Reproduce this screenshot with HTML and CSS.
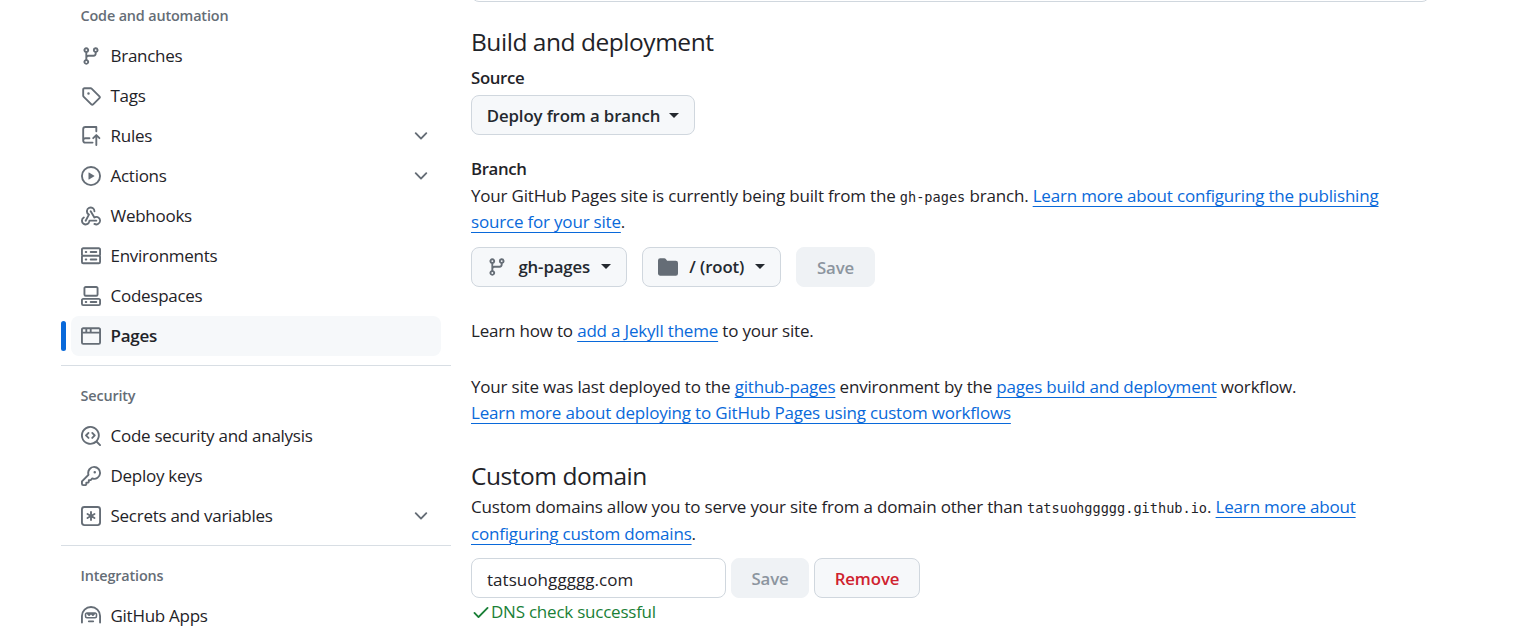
FILE: index.html
```html
<!DOCTYPE html>
<html lang="en">
<head>
<meta charset="utf-8">
<title>Pages settings</title>
<link rel="stylesheet" href="styles.css">
</head>
<body>
<svg class="sprite" aria-hidden="true">
  <symbol id="branch" viewBox="0 0 16 16"><path d="M9.5 3.25a2.25 2.25 0 1 1 3 2.122V6A2.5 2.5 0 0 1 10 8.5H6a1 1 0 0 0-1 1v1.128a2.251 2.251 0 1 1-1.5 0V5.372a2.25 2.25 0 1 1 1.5 0v1.836A2.493 2.493 0 0 1 6 7h4a1 1 0 0 0 1-1v-.628A2.25 2.25 0 0 1 9.5 3.25Zm-6 0a.75.75 0 1 0 1.5 0 .75.75 0 0 0-1.5 0Zm8.25-.75a.75.75 0 1 0 0 1.5.75.75 0 0 0 0-1.5ZM4.25 12a.75.75 0 1 0 0 1.5.75.75 0 0 0 0-1.5Z"/></symbol>
  <symbol id="tag" viewBox="0 0 16 16"><path d="M1 7.775V2.75C1 1.784 1.784 1 2.75 1h5.025c.464 0 .91.184 1.238.513l6.25 6.25a1.75 1.75 0 0 1 0 2.474l-5.026 5.026a1.75 1.75 0 0 1-2.474 0l-6.25-6.25A1.752 1.752 0 0 1 1 7.775Zm1.5 0c0 .066.026.13.073.177l6.25 6.25a.25.25 0 0 0 .354 0l5.025-5.025a.25.25 0 0 0 0-.354l-6.25-6.25a.25.25 0 0 0-.177-.073H2.75a.25.25 0 0 0-.25.25ZM6 5a1 1 0 1 1 0 2 1 1 0 0 1 0-2Z"/></symbol>
  <symbol id="push" viewBox="0 0 16 16"><path d="M1 2.5A2.5 2.5 0 0 1 3.5 0h8.75a.75.75 0 0 1 .75.75v3.5a.75.75 0 0 1-1.5 0V1.5h-8a1 1 0 0 0-1 1v6.708A2.493 2.493 0 0 1 3.5 9h3.25a.75.75 0 0 1 0 1.5H3.5a1 1 0 0 0 0 2h5.75a.75.75 0 0 1 0 1.5H3.5A2.5 2.5 0 0 1 1 11.5Zm13.23 7.79-1.225-1.224v6.184a.75.75 0 0 1-1.5 0V9.066L10.28 10.29a.75.75 0 0 1-1.06-1.061l2.505-2.504a.75.75 0 0 1 1.06 0L15.29 9.23a.751.751 0 0 1-1.06 1.06Z"/></symbol>
  <symbol id="play" viewBox="0 0 16 16"><path d="M8 0a8 8 0 1 1 0 16A8 8 0 0 1 8 0ZM1.5 8a6.5 6.5 0 1 0 13 0 6.5 6.5 0 0 0-13 0Zm4.879-2.773 4.264 2.559a.25.25 0 0 1 0 .428l-4.264 2.559A.25.25 0 0 1 6 10.559V5.442a.25.25 0 0 1 .379-.215Z"/></symbol>
  <symbol id="webhook" viewBox="0 0 16 16"><path d="M5.5 4.25a2.25 2.25 0 0 1 4.5 0 .75.75 0 0 0 1.5 0 3.75 3.75 0 1 0-6.14 2.889l-2.272 4.258a.75.75 0 0 0 1.324.706L7 7.25a.75.75 0 0 0-.309-1.015A2.25 2.25 0 0 1 5.5 4.25Z"/><path d="M7.364 3.607a.75.75 0 0 1 1.03.257l2.608 4.349a3.75 3.75 0 1 1-.628 6.785.75.75 0 0 1 .752-1.299 2.25 2.25 0 1 0-.033-3.88.75.75 0 0 1-1.03-.256L7.107 4.636a.75.75 0 0 1 .257-1.03Z"/><path d="M2.9 8.776A.75.75 0 0 1 2.625 9.8 2.25 2.25 0 1 0 6 11.75a.75.75 0 0 1 .75-.751h5.5a.75.75 0 0 1 0 1.5H7.425a3.751 3.751 0 1 1-5.55-3.998.75.75 0 0 1 1.024.274Z"/></symbol>
  <symbol id="server" viewBox="0 0 16 16"><path d="M1.75 1h12.5c.966 0 1.75.784 1.75 1.75v4c0 .372-.116.717-.314 1 .198.283.314.628.314 1v4a1.75 1.75 0 0 1-1.75 1.75H1.75A1.75 1.75 0 0 1 0 12.75v-4c0-.358.109-.707.314-1a1.739 1.739 0 0 1-.314-1v-4C0 1.784.784 1 1.75 1ZM1.5 2.75v4c0 .138.112.25.25.25h12.5a.25.25 0 0 0 .25-.25v-4a.25.25 0 0 0-.25-.25H1.75a.25.25 0 0 0-.25.25Zm.25 5.75a.25.25 0 0 0-.25.25v4c0 .138.112.25.25.25h12.5a.25.25 0 0 0 .25-.25v-4a.25.25 0 0 0-.25-.25ZM7 4.75A.75.75 0 0 1 7.75 4h4.5a.75.75 0 0 1 0 1.5h-4.5A.75.75 0 0 1 7 4.75ZM7.75 10h4.5a.75.75 0 0 1 0 1.5h-4.5a.75.75 0 0 1 0-1.5ZM3 4.75A.75.75 0 0 1 3.75 4h.5a.75.75 0 0 1 0 1.5h-.5A.75.75 0 0 1 3 4.75ZM3.75 10h.5a.75.75 0 0 1 0 1.5h-.5a.75.75 0 0 1 0-1.5Z"/></symbol>
  <symbol id="codespaces" viewBox="0 0 16 16"><path d="M0 11.25c0-.966.784-1.75 1.75-1.75h12.5c.966 0 1.75.784 1.75 1.75v3A1.75 1.75 0 0 1 14.25 16H1.75A1.75 1.75 0 0 1 0 14.25Zm2-9.5C2 .784 2.784 0 3.75 0h8.5C13.216 0 14 .784 14 1.75v5a1.75 1.75 0 0 1-1.75 1.75h-8.5A1.75 1.75 0 0 1 2 6.75Zm1.75-.25a.25.25 0 0 0-.25.25v5c0 .138.112.25.25.25h8.5a.25.25 0 0 0 .25-.25v-5a.25.25 0 0 0-.25-.25Zm-2 9.5a.25.25 0 0 0-.25.25v3c0 .138.112.25.25.25h12.5a.25.25 0 0 0 .25-.25v-3a.25.25 0 0 0-.25-.25ZM7 12.75a.75.75 0 0 1 .75-.75h4.5a.75.75 0 0 1 0 1.5h-4.5a.75.75 0 0 1-.75-.75Zm-4 0a.75.75 0 0 1 .75-.75h.5a.75.75 0 0 1 0 1.5h-.5a.75.75 0 0 1-.75-.75Z"/></symbol>
  <symbol id="browser" viewBox="0 0 16 16"><path d="M0 2.75C0 1.784.784 1 1.75 1h12.5c.966 0 1.75.784 1.75 1.75v10.5A1.75 1.75 0 0 1 14.25 15H1.75A1.75 1.75 0 0 1 0 13.25ZM14.5 6h-13v7.25c0 .138.112.25.25.25h12.5a.25.25 0 0 0 .25-.25Zm-6-3.5v2h6V2.75a.25.25 0 0 0-.25-.25ZM5 2.5v2h2v-2Zm-3.25 0a.25.25 0 0 0-.25.25V4.5h2v-2Z"/></symbol>
  <symbol id="codescan" viewBox="0 0 16 16"><path d="M8.47 4.97a.75.75 0 0 0 0 1.06L9.94 7.5 8.47 8.97a.75.75 0 1 0 1.06 1.06l2-2a.75.75 0 0 0 0-1.06l-2-2a.75.75 0 0 0-1.06 0ZM6.53 6.03a.75.75 0 0 0-1.06-1.06l-2 2a.75.75 0 0 0 0 1.06l2 2a.75.75 0 1 0 1.06-1.06L5.06 7.5l1.47-1.47Z"/><path d="M12.246 13.307a7.501 7.501 0 1 1 1.06-1.06l2.474 2.473a.749.749 0 1 1-1.06 1.06ZM1.5 7.5a6.002 6.002 0 0 0 3.608 5.504 6.002 6.002 0 0 0 6.486-1.117.748.748 0 0 1 .292-.293A6 6 0 1 0 1.5 7.5Z"/></symbol>
  <symbol id="key" viewBox="0 0 16 16"><path d="M10.5 0a5.499 5.499 0 1 1-1.288 10.848l-.932.932a.749.749 0 0 1-.53.22H7v.75a.749.749 0 0 1-.22.53l-.5.5a.749.749 0 0 1-.53.22H5v.75a.749.749 0 0 1-.22.53l-.5.5a.749.749 0 0 1-.53.22h-2A1.75 1.75 0 0 1 0 14.25v-2c0-.199.079-.389.22-.53l4.932-4.932A5.5 5.5 0 0 1 10.5 0Zm-4 5.5c-.001.431.069.86.205 1.269a.75.75 0 0 1-.181.768L1.5 12.56v1.69c0 .138.112.25.25.25h1.69l.06-.06v-1.19a.75.75 0 0 1 .75-.75h1.19l.06-.06v-1.19a.75.75 0 0 1 .75-.75h1.19l1.023-1.025a.75.75 0 0 1 .768-.18A4 4 0 1 0 6.5 5.5ZM11 6a1 1 0 1 1 0-2 1 1 0 0 1 0 2Z"/></symbol>
  <symbol id="asterisk" viewBox="0 0 16 16"><path d="M0 2.75A2.75 2.75 0 0 1 2.75 0h10.5A2.75 2.75 0 0 1 16 2.75v10.5A2.75 2.75 0 0 1 13.25 16H2.75A2.75 2.75 0 0 1 0 13.25ZM2.75 1.5c-.69 0-1.25.56-1.25 1.25v10.5c0 .69.56 1.25 1.25 1.25h10.5c.69 0 1.25-.56 1.25-1.25V2.75c0-.69-.56-1.25-1.25-1.25Z"/><path d="M8 4a.75.75 0 0 1 .75.75V6.7l1.69-.975a.75.75 0 0 1 .75 1.3L9.5 8l1.69.976a.75.75 0 0 1-.75 1.298L8.75 9.3v1.951a.75.75 0 0 1-1.5 0V9.299l-1.69.976a.75.75 0 0 1-.75-1.3L6.5 8l-1.69-.975a.75.75 0 0 1 .75-1.3l1.69.976V4.75A.75.75 0 0 1 8 4Z"/></symbol>
  <symbol id="hubot" viewBox="0 0 16 16"><path d="M0 8a8 8 0 1 1 16 0v5.25a.75.75 0 0 1-1.5 0V8a6.5 6.5 0 1 0-13 0v5.25a.75.75 0 0 1-1.5 0Zm5.5 4.25a.75.75 0 0 1 .75-.75h3.5a.75.75 0 0 1 0 1.5h-3.5a.75.75 0 0 1-.75-.75ZM3 6.75C3 5.784 3.784 5 4.75 5h6.5c.966 0 1.75.784 1.75 1.75v1.5A1.75 1.75 0 0 1 11.25 10h-6.5A1.75 1.75 0 0 1 3 8.25Zm1.47-.53a.75.75 0 0 0-.22.53v1.5c0 .276.224.5.5.5h6.5a.5.5 0 0 0 .5-.5v-1.5a.75.75 0 0 0-.22-.53l-1.5 1.5a.75.75 0 0 1-1.06 0L8 6.81l-.97.97a.75.75 0 0 1-1.06 0Z" fill-rule="evenodd"/></symbol>
  <symbol id="folder" viewBox="0 0 16 16"><path d="M1.75 1A1.75 1.75 0 0 0 0 2.75v10.5C0 14.216.784 15 1.75 15h12.5A1.75 1.75 0 0 0 16 13.25v-8.5A1.75 1.75 0 0 0 14.25 3H7.5a.25.25 0 0 1-.2-.1l-.9-1.2C6.07 1.26 5.55 1 5 1H1.75Z"/></symbol>
  <symbol id="check" viewBox="0 0 16 16"><path d="M13.78 4.22a.75.75 0 0 1 0 1.06l-7.25 7.25a.75.75 0 0 1-1.06 0L2.22 9.28a.751.751 0 0 1 1.06-1.06L6 10.94l6.72-6.72a.75.75 0 0 1 1.06 0Z"/></symbol>
  <symbol id="chevron" viewBox="0 0 16 16"><path d="M12.78 5.22a.749.749 0 0 1 0 1.06l-4.25 4.25a.749.749 0 0 1-1.06 0L3.22 6.28a.749.749 0 1 1 1.06-1.06L8 8.939l3.72-3.719a.749.749 0 0 1 1.06 0Z"/></symbol>
</svg>
<div class="layout">
  <nav class="sidebar">
    <h3 class="group-title">Code and automation</h3>
    <a class="item"><svg class="icon"><use href="#branch"/></svg><span class="label">Branches</span></a>
    <a class="item"><svg class="icon"><use href="#tag"/></svg><span class="label">Tags</span></a>
    <a class="item"><svg class="icon"><use href="#push"/></svg><span class="label">Rules</span><svg class="icon"><use href="#chevron"/></svg></a>
    <a class="item"><svg class="icon"><use href="#play"/></svg><span class="label">Actions</span><svg class="icon"><use href="#chevron"/></svg></a>
    <a class="item"><svg class="icon"><use href="#webhook"/></svg><span class="label">Webhooks</span></a>
    <a class="item"><svg class="icon"><use href="#server"/></svg><span class="label">Environments</span></a>
    <a class="item"><svg class="icon"><use href="#codespaces"/></svg><span class="label">Codespaces</span></a>
    <a class="item current"><svg class="icon"><use href="#browser"/></svg><span class="label">Pages</span></a>
    <hr class="divider">
    <h3 class="group-title">Security</h3>
    <a class="item"><svg class="icon"><use href="#codescan"/></svg><span class="label">Code security and analysis</span></a>
    <a class="item"><svg class="icon"><use href="#key"/></svg><span class="label">Deploy keys</span></a>
    <a class="item"><svg class="icon"><use href="#asterisk"/></svg><span class="label">Secrets and variables</span><svg class="icon"><use href="#chevron"/></svg></a>
    <hr class="divider">
    <h3 class="group-title">Integrations</h3>
    <a class="item"><svg class="icon"><use href="#hubot"/></svg><span class="label">GitHub Apps</span></a>
  </nav>
  <main class="content">
    <div class="card-end"></div>
    <h2 class="title">Build and deployment</h2>
    <h4 class="subtitle source">Source</h4>
    <div class="row"><button class="btn deploy">Deploy from a branch<i class="caret"></i></button></div>
    <h4 class="subtitle branch">Branch</h4>
    <p class="text">Your GitHub Pages site is currently being built from the <code class="code">gh-pages</code> branch. <a class="link">Learn more about configuring the publishing<br>source for your site</a>.</p>
    <div class="row pickers">
      <button class="btn ref"><svg class="icon"><use href="#branch"/></svg>gh-pages<i class="caret"></i></button>
      <button class="btn root"><svg class="icon"><use href="#folder"/></svg>/ (root)<i class="caret"></i></button>
      <button class="btn disabled save">Save</button>
    </div>
    <p class="text jekyll">Learn how to <a class="link">add a Jekyll theme</a> to your site.</p>
    <p class="text deployed">Your site was last deployed to the <a class="link">github-pages</a> environment by the <a class="link">pages build and deployment</a> workflow.<br><a class="link">Learn more about deploying to GitHub Pages using custom workflows</a></p>
    <h2 class="title domain">Custom domain</h2>
    <p class="text about-domain">Custom domains allow you to serve your site from a domain other than <code class="code">tatsuohggggg.github.io</code>. <a class="link">Learn more about<br>configuring custom domains</a>.</p>
    <div class="row domain-form">
      <input class="input" value="tatsuohggggg.com">
      <button class="btn disabled save-domain">Save</button>
      <button class="btn remove">Remove</button>
    </div>
    <p class="text status"><svg class="icon"><use href="#check"/></svg>DNS check successful</p>
  </main>
</div>
</body>
</html>
```

FILE: styles.css
```css
* { box-sizing: border-box; }
body {
  margin: 0;
  height: 637px;
  overflow: hidden;
  background: #fff;
  color: #1f2328;
  font: 400 17px/26.25px "Open Sans", "Noto Sans", sans-serif;
  letter-spacing: -.19px;
}
.sprite { display: none; }
.layout {
  display: grid;
  grid-template-columns: 389.5px 959px;
  column-gap: 20.5px;
  padding-left: 61px;
}
.sidebar { margin-top: -4px; letter-spacing: -.27px; }
.group-title {
  margin: 0;
  padding-left: 19.5px;
  font-size: 14.4px;
  font-weight: 600;
  letter-spacing: -.15px;
  line-height: 39px;
  height: 40px;
  color: #656d76;
}
.item {
  display: flex;
  align-items: center;
  gap: 9.5px;
  height: 40px;
  margin: 0 9.5px 0 10px;
  padding: 0 10px;
  border-radius: 8px;
}
.label { flex: 1; }
.icon { width: 20px; height: 20px; flex: none; fill: #656d76; }
.current { position: relative; background: #f6f8fa; font-weight: 600; }
.current::before {
  content: "";
  position: absolute;
  left: -10px;
  top: 5px;
  width: 5px;
  height: 30px;
  border-radius: 3px;
  background: #0969da;
}
.divider { margin: 9px 0 10px; border: 0; height: 1px; background: #d8dee4; }

.card-end {
  height: 20px;
  margin-top: -18px;
  border: 1px solid #d0d7de;
  border-radius: 8px;
}
.title { margin: 21px 0 0; font-size: 24.5px; font-weight: 400; line-height: 38px; letter-spacing: -.46px; }
.subtitle { margin: 0; font-size: 16.8px; font-weight: 600; line-height: 26px; letter-spacing: -.35px; }
.source { margin-top: 4px; }
.branch { margin-top: 21px; }
.text { margin: 1px 0 0; white-space: nowrap; }
.link {
  color: #0969da;
  text-decoration: underline;
  text-decoration-thickness: 1px;
  text-underline-offset: 4px;
}
.code { font: 400 13.6px "DejaVu Sans Mono", monospace; letter-spacing: 0; }
.row { display: flex; height: 40px; margin-top: 4px; }
.btn {
  display: flex;
  align-items: center;
  justify-content: center;
  padding: 0;
  height: 40px;
  border: 1px solid #d0d7de;
  border-radius: 8px;
  background: #f6f8fa;
  color: #24292f;
  font: 600 16.8px "Open Sans", sans-serif;
  letter-spacing: -.12px;
}
.caret {
  margin-left: 9px;
  border: 5px solid transparent;
  border-top-color: currentColor;
  border-bottom: 0;
}
.deploy { width: 224px; }
.pickers { margin-top: 11.5px; }
.pickers .btn { padding-bottom: 1px; }
.pickers .save { padding-bottom: 0; }
.pickers .caret { margin-left: 10.5px; }
.ref { width: 156px; margin-right: 15px; }
.root { width: 139px; margin-right: 15px; }
.ref .icon, .root .icon { margin-right: 11px; }
.disabled { border-color: #eff2f5; background: #eff2f5; color: #8c959f; }
.save { width: 79px; }
.jekyll { margin-top: 31px; }
.deployed { margin-top: 29.5px; }
.domain { margin-top: 30.5px; line-height: 37px; }
.about-domain { margin-top: .5px; }
.domain-form { margin-top: 11.5px; gap: 5px; }
.input {
  width: 255px;
  height: 40px;
  padding: 2px 15px 0;
  border: 1px solid #d0d7de;
  border-radius: 8px;
  background: #fff;
  color: #1f2328;
  font: inherit;
  letter-spacing: .05px;
}
.save-domain { width: 78px; }
.remove { width: 106px; color: #cf222e; }
.status { display: flex; align-items: center; margin-top: .5px; letter-spacing: -.23px; color: #1a7f37; }
.status .icon { fill: #1a7f37; }
```
